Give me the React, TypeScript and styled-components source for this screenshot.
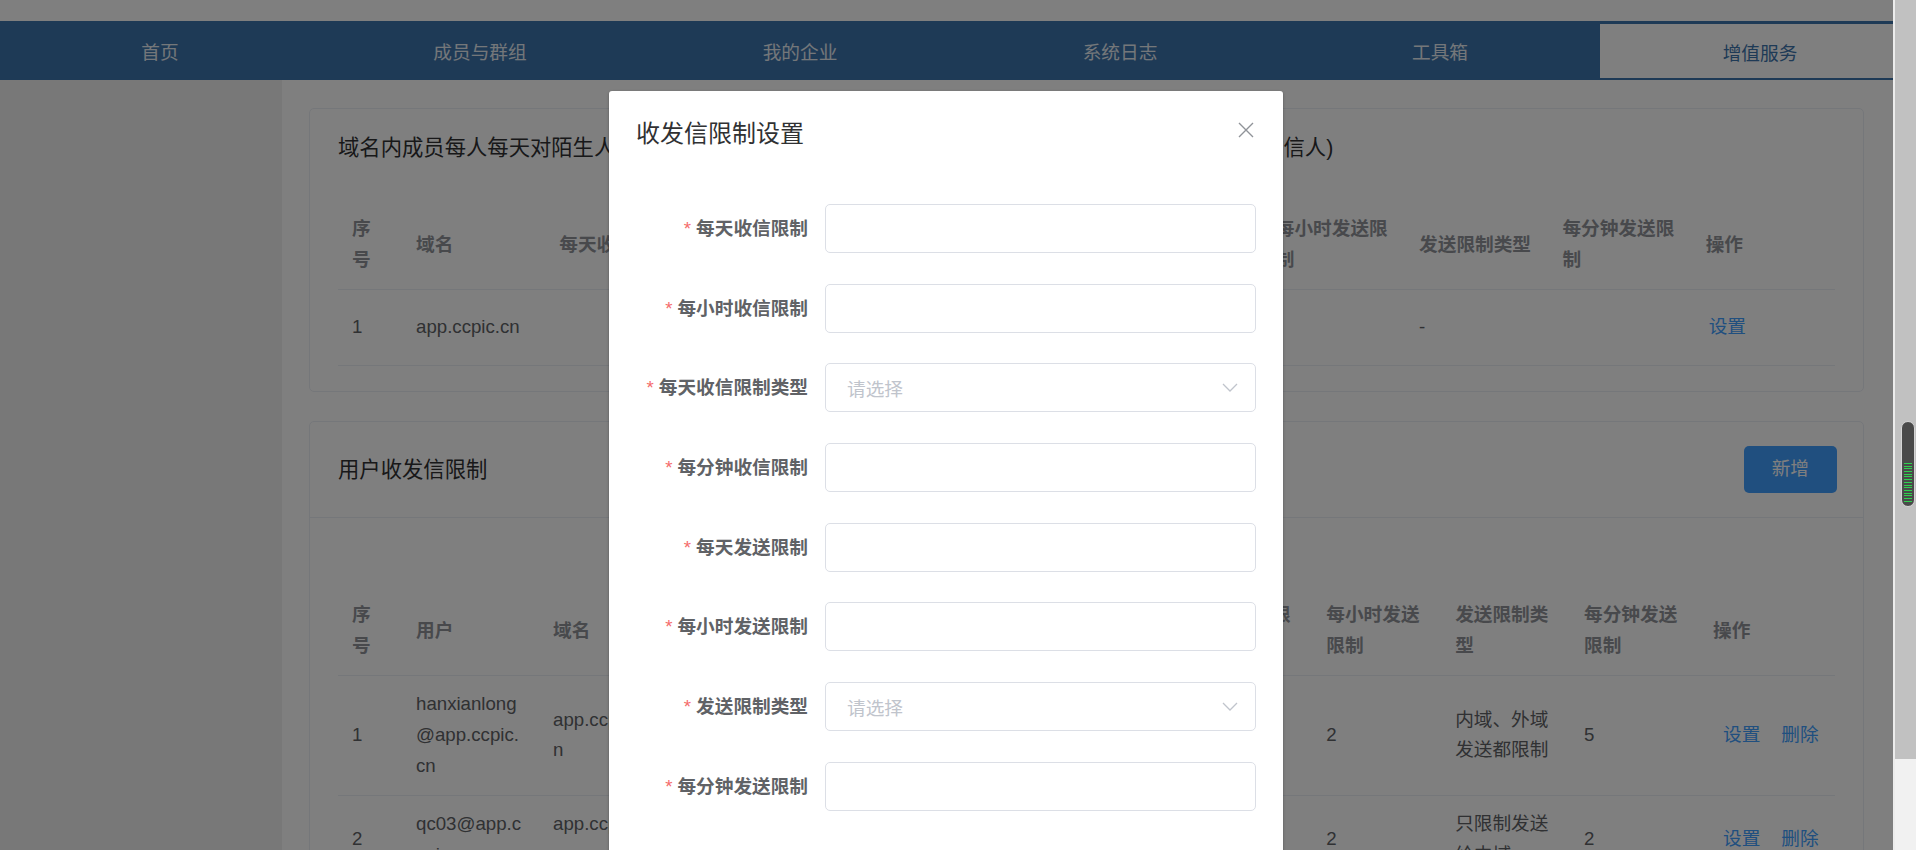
import React from 'react';
import styled, { createGlobalStyle } from 'styled-components';

const GlobalStyle = createGlobalStyle`
    html, body {
        margin: 0;
        padding: 0;
        overflow: hidden;
    }
    body {
        font-family: 'Liberation Sans', 'Noto Sans CJK SC', sans-serif;
        color: #606266;
    }
    * {
        box-sizing: border-box;
    }
`;

const Colors = {
    primary: '#409eff',
    nav: '#3c74ac',
    text: '#606266',
    heading: '#303133',
    muted: '#909399',
    border: '#ebeef5',
    inputBorder: '#dcdfe6',
    placeholder: '#c0c4cc',
    danger: '#f56c6c',
};

const Shell = styled.div`
    display: flex;
    width: 1916px;
    height: 850px;
`;

const Page = styled.div`
    position: relative;
    flex: 1;
    height: 850px;
    overflow: hidden;
    background: #fff;
    display: flex;
    flex-direction: column;
`;

const TopStrip = styled.div`
    height: 21px;
    flex-shrink: 0;
    background: #fff;
`;

const Nav = styled.nav`
    height: 59px;
    flex-shrink: 0;
    display: flex;
    background: ${Colors.nav};
    overflow: hidden;
`;

const NavItem = styled.div<{ $active?: boolean }>`
    flex: 0 0 320px;
    display: flex;
    align-items: center;
    justify-content: center;
    font-size: 18.667px;
    color: ${(p) => (p.$active ? Colors.nav : '#e8eef5')};
    background: ${(p) => (p.$active ? '#fff' : 'transparent')};
    margin: ${(p) => (p.$active ? '3px 0 2px' : '0')};
`;

const Body = styled.div`
    flex: 1;
    display: flex;
    min-height: 0;
`;

const Sidebar = styled.aside`
    width: 282px;
    flex-shrink: 0;
    background: #f0f0f0;
`;

const Content = styled.main`
    flex: 1;
    padding: 28px 29px 0 27px;
`;

const Card = styled.section`
    border: 1px solid ${Colors.border};
    border-radius: 5px;
    background: #fff;
    & + & {
        margin-top: 29px;
    }
`;

const PlainCardBody = styled.div`
    padding: 24px 28px 25px;
`;

const CardTitle = styled.h2`
    margin: 0;
    font-size: 21.333px;
    line-height: 30px;
    font-weight: 400;
    color: ${Colors.heading};
`;

const PlainTitle = styled(CardTitle)`
    margin-bottom: 38px;
`;

const CardHeader = styled.div`
    display: flex;
    align-items: center;
    justify-content: space-between;
    padding: 24px 26px 24px 28px;
    border-bottom: 1px solid ${Colors.border};
`;

const CardBody = styled.div`
    padding: 69px 28px 20px;
`;

const PrimaryButton = styled.button`
    border: none;
    border-radius: 5px;
    background: ${Colors.primary};
    color: #fff;
    font-family: inherit;
    font-size: 18.667px;
    line-height: 18.667px;
    padding: 14px 28px;
`;

const Table = styled.table`
    width: 100%;
    table-layout: fixed;
    border-collapse: collapse;
    font-size: 18.667px;
    line-height: 30.667px;
    border-bottom: 1px solid ${Colors.border};
`;

const Th = styled.th`
    padding: 13.333px 14px;
    text-align: left;
    vertical-align: middle;
    font-weight: 700;
    color: ${Colors.muted};
    word-break: break-all;
    border-bottom: 1px solid ${Colors.border};
`;

const Td = styled.td`
    padding: 13.333px 14px;
    text-align: left;
    vertical-align: middle;
    color: ${Colors.text};
    word-break: break-all;
    border-bottom: 1px solid ${Colors.border};
`;

const LinkButton = styled.span<{ $indent: number }>`
    display: inline-block;
    padding: 15px 0;
    line-height: 18.667px;
    color: ${Colors.primary};
    margin-left: ${(p) => p.$indent}px;
    & + & {
        margin-left: 21px;
    }
`;

const Mask = styled.div`
    position: absolute;
    inset: 0;
    background: rgba(0, 0, 0, 0.5);
`;

const Dialog = styled.div`
    position: absolute;
    left: 609px;
    top: 91px;
    width: 674px;
    background: #fff;
    border-radius: 3px;
    box-shadow: 0 1px 3px rgba(0, 0, 0, 0.3);
`;

const DialogHeader = styled.div`
    display: flex;
    align-items: flex-start;
    justify-content: space-between;
    padding: 27px 27px 13px;
`;

const DialogTitle = styled.span`
    font-size: 24px;
    line-height: 32px;
    color: ${Colors.heading};
`;

const CloseIcon = styled.svg`
    margin-top: 4px;
    margin-right: 2px;
`;

const Form = styled.div`
    display: flex;
    flex-direction: column;
    gap: 30.7px;
    padding: 41px 27px 60px;
`;

const FormRow = styled.div`
    display: flex;
`;

const Label = styled.label`
    width: 189px;
    flex-shrink: 0;
    padding-right: 17px;
    text-align: right;
    line-height: 49px;
    font-size: 18.667px;
    font-weight: 700;
    color: ${Colors.text};
`;

const Required = styled.span`
    color: ${Colors.danger};
    margin-right: 5px;
    font-weight: 400;
`;

const Control = styled.div<{ $select?: boolean }>`
    flex: 1;
    height: 49px;
    display: flex;
    align-items: center;
    justify-content: space-between;
    padding: 0 17px 0 21px;
    border: 1px solid ${Colors.inputBorder};
    border-radius: 5px;
    background: #fff;
    font-size: 18.667px;
    color: ${(p) => (p.$select ? Colors.placeholder : Colors.text)};
`;

const ScrollRail = styled.div`
    width: 23px;
    flex-shrink: 0;
    display: flex;
    flex-direction: column;
    border-left: 2px solid #ececec;
    background: #f1f1f1;
`;

const TrackUpper = styled.div`
    height: 759px;
    padding-top: 421px;
    background: #c1c1c1;
`;

const Thumb = styled.div`
    width: 14px;
    height: 86px;
    margin-left: 6px;
    border-radius: 7px;
    border: 1px solid #d6d6d6;
    background: #4a4a4a;
    padding: 41px 2px 4px;
`;

const Stripes = styled.div`
    height: 100%;
    background: repeating-linear-gradient(to bottom, #2fd04e 0 1px, transparent 1px 2.7px);
`;

type Cell = string | string[];

const navItems = ['首页', '成员与群组', '我的企业', '系统日志', '工具箱', '增值服务'];

const domainColumns = [
    '序号',
    '域名',
    '每天收信限制',
    '每小时收信限制',
    '每天收信限制类型',
    '每分钟收信限制',
    '每天发送限制',
    '每小时发送限制',
    '发送限制类型',
    '每分钟发送限制',
    '操作',
];

const domainRows: Cell[][] = [['1', 'app.ccpic.cn', '', '', '-', '', '', '', '-', '', ['设置']]];

const userColumns = [
    '序号',
    '用户',
    '域名',
    '每天收信限制',
    '每小时收信限制',
    '每天收信限制类型',
    '每分钟收信限制',
    '每天发送限制',
    '每小时发送限制',
    '发送限制类型',
    '每分钟发送限制',
    '操作',
];

const userRows: Cell[][] = [
    [
        '1',
        'hanxianlong@app.ccpic.cn',
        'app.ccpic.cn',
        '100',
        '10',
        '内域、外域收信都限制',
        '2',
        '50',
        '2',
        '内域、外域发送都限制',
        '5',
        ['设置', '删除'],
    ],
    ['2', 'qc03@app.ccpic.cn', 'app.ccpic.cn', '80', '8', '只限制内域', '2', '40', '2', '只限制发送给内域', '2', ['设置', '删除']],
];

const formFields = [
    { label: '每天收信限制' },
    { label: '每小时收信限制' },
    { label: '每天收信限制类型', select: true },
    { label: '每分钟收信限制' },
    { label: '每天发送限制' },
    { label: '每小时发送限制' },
    { label: '发送限制类型', select: true },
    { label: '每分钟发送限制' },
];

type TableProps = {
    columns: string[];
    rows: Cell[][];
    widths: (number | undefined)[];
    actionIndent: number;
};

const DataTable = ({ columns, rows, widths, actionIndent }: TableProps) => (
    <Table>
        <colgroup>
            {columns.map((c, i) => (
                <col key={c} style={widths[i] ? { width: widths[i] } : undefined} />
            ))}
        </colgroup>
        <thead>
            <tr>
                {columns.map((c) => (
                    <Th key={c}>{c}</Th>
                ))}
            </tr>
        </thead>
        <tbody>
            {rows.map((row, r) => (
                <tr key={r}>
                    {row.map((cell, i) =>
                        Array.isArray(cell) ? (
                            <Td key={i}>
                                {cell.map((a) => (
                                    <LinkButton key={a} $indent={actionIndent}>
                                        {a}
                                    </LinkButton>
                                ))}
                            </Td>
                        ) : (
                            <Td key={i}>{cell}</Td>
                        ),
                    )}
                </tr>
            ))}
        </tbody>
    </Table>
);

const Chevron = () => (
    <svg width="16" height="9" viewBox="0 0 16 9" fill="none">
        <polyline points="1,1 8,8 15,1" stroke={Colors.placeholder} strokeWidth="1.3" />
    </svg>
);

const userWidths = [64, 137, undefined, undefined, undefined, undefined, undefined, undefined, undefined, undefined, undefined, 136];

export default function App() {
    return (
        <Shell>
            <GlobalStyle />
            <Page>
                <TopStrip />
                <Nav>
                    {navItems.map((n) => (
                        <NavItem key={n} $active={n === '增值服务'}>
                            {n}
                        </NavItem>
                    ))}
                </Nav>
                <Body>
                    <Sidebar />
                    <Content>
                        <Card>
                            <PlainCardBody>
                                <PlainTitle>
                                    域名内成员每人每天对陌生人发信数量限制(每天发送给陌生人的邮件数上限，陌生人指非本域名的收信人)
                                </PlainTitle>
                                <DataTable columns={domainColumns} rows={domainRows} widths={[64]} actionIndent={3} />
                            </PlainCardBody>
                        </Card>
                        <Card>
                            <CardHeader>
                                <CardTitle>用户收发信限制</CardTitle>
                                <PrimaryButton>新增</PrimaryButton>
                            </CardHeader>
                            <CardBody>
                                <DataTable columns={userColumns} rows={userRows} widths={userWidths} actionIndent={10} />
                            </CardBody>
                        </Card>
                    </Content>
                </Body>
                <Mask />
                <Dialog>
                    <DialogHeader>
                        <DialogTitle>收发信限制设置</DialogTitle>
                        <CloseIcon width="16" height="16" viewBox="0 0 16 16">
                            <path d="M1 1 L15 15 M15 1 L1 15" stroke={Colors.muted} strokeWidth="1.4" />
                        </CloseIcon>
                    </DialogHeader>
                    <Form>
                        {formFields.map((f) => (
                            <FormRow key={f.label}>
                                <Label>
                                    <Required>*</Required>
                                    {f.label}
                                </Label>
                                <Control $select={f.select}>
                                    {f.select && (
                                        <>
                                            <span>请选择</span>
                                            <Chevron />
                                        </>
                                    )}
                                </Control>
                            </FormRow>
                        ))}
                    </Form>
                </Dialog>
            </Page>
            <ScrollRail>
                <TrackUpper>
                    <Thumb>
                        <Stripes />
                    </Thumb>
                </TrackUpper>
            </ScrollRail>
        </Shell>
    );
}
